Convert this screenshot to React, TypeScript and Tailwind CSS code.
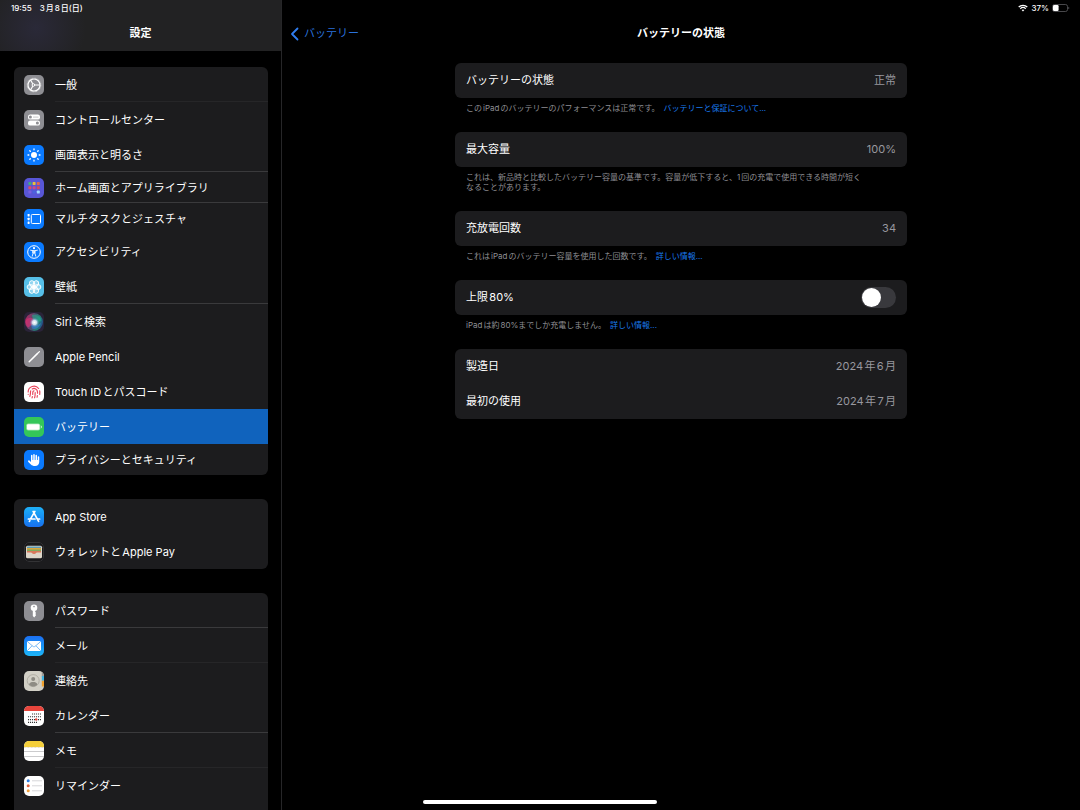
import React, { useState } from 'react';
import { Fingerprint } from 'lucide-react';
import { FaHand } from 'react-icons/fa6';
import clsx from 'clsx';

interface SettingItem {
  label: string;
  icon: React.ReactNode;
  tile: string;
  line?: 'strong' | 'faint';
  compact?: boolean;
  active?: boolean;
}

const Glyph = ({ children }: { children: React.ReactNode }) => (
  <svg viewBox="0 0 20 20" className="size-5" fill="none" aria-hidden="true">
    {children}
  </svg>
);

const GearIcon = () => (
  <Glyph>
    <circle cx="10" cy="10" r="6" stroke="#fff" strokeWidth="1.2" />
    <circle cx="10" cy="10" r="6.8" stroke="#fff" strokeWidth="0.7" strokeDasharray="0.8 0.7" />
    <circle cx="9.4" cy="10" r="1.3" stroke="#fff" strokeWidth="1" />
    <path d="M10.8 10H16M8.8 8.9L6.4 4.8M8.8 11.1L6.4 15.2" stroke="#fff" strokeWidth="1.1" />
  </Glyph>
);

const ControlCenterIcon = () => (
  <Glyph>
    <rect x="4" y="4.6" width="12" height="5" rx="2.2" fill="#fff" />
    <circle cx="6.4" cy="7.1" r="1.5" fill="#8e8e93" />
    <path d="M9 7.1H14.5" stroke="#8e8e93" strokeWidth="0.5" />
    <rect x="4" y="10.6" width="12" height="5" rx="2.2" fill="#fff" />
    <circle cx="13.4" cy="13.1" r="1.5" fill="#8e8e93" />
  </Glyph>
);

const BrightnessIcon = () => (
  <Glyph>
    <circle cx="10" cy="10" r="3" fill="#fff" />
    <path
      d="M10 4V4.8M10 15.2V16M4 10H4.8M15.2 10H16M5.8 5.8L6.3 6.3M13.7 13.7L14.2 14.2M5.8 14.2L6.3 13.7M13.7 6.3L14.2 5.8"
      stroke="#fff"
      strokeWidth="1.3"
      strokeLinecap="round"
    />
  </Glyph>
);

const HomeScreenIcon = () => (
  <Glyph>
    <rect x="4.4" y="4" width="3" height="3" rx="0.7" fill="#3fae7c" />
    <rect x="8.6" y="4" width="3" height="3" rx="0.7" fill="#e8bf3c" />
    <rect x="12.8" y="4" width="3" height="3" rx="0.7" fill="#e0664c" />
    <rect x="4.4" y="8.2" width="3" height="3" rx="0.7" fill="#e04a62" />
    <rect x="8.6" y="8.2" width="3" height="3" rx="0.7" fill="#c94a8c" />
    <rect x="12.8" y="8.2" width="3" height="3" rx="0.7" fill="#d8475c" />
    <rect x="4.4" y="12.6" width="3" height="3" rx="0.7" fill="#7a5fe0" />
    <rect x="8.6" y="12.6" width="3" height="3" rx="0.7" fill="#4a63e0" />
    <rect x="12.8" y="12.6" width="3" height="3" rx="0.7" fill="#9fd8ff" />
  </Glyph>
);

const MultitaskIcon = () => (
  <Glyph>
    <rect x="7.3" y="5.5" width="9.2" height="9" rx="1" stroke="#fff" strokeWidth="1" />
    <rect x="3.6" y="5" width="2" height="2.4" rx="0.4" fill="#fff" />
    <rect x="3.6" y="8.8" width="2" height="2.4" rx="0.4" fill="#fff" />
    <rect x="3.6" y="12.6" width="2" height="2.4" rx="0.4" fill="#fff" />
  </Glyph>
);

const AccessibilityIcon = () => (
  <Glyph>
    <circle cx="10" cy="10" r="6.3" stroke="#fff" strokeWidth="1" />
    <circle cx="10" cy="6.2" r="1.1" fill="#fff" />
    <path
      d="M6.6 8.2L9.2 8.7V11L8.2 14.2M13.4 8.2L10.8 8.7V11L11.8 14.2M9.2 8.7H10.8V11H9.2Z"
      stroke="#fff"
      strokeWidth="0.9"
      strokeLinecap="round"
      strokeLinejoin="round"
    />
  </Glyph>
);

const WallpaperIcon = () => (
  <Glyph>
    {[30, 90, 150, 210, 270, 330].map((angle) => (
      <ellipse
        key={angle}
        cx="10"
        cy="6.2"
        rx="2.5"
        ry="3.1"
        fill="#fff"
        fillOpacity="0.35"
        stroke="#fff"
        strokeWidth="0.9"
        transform={`rotate(${angle} 10 10)`}
      />
    ))}
    <circle cx="10" cy="10" r="1.6" fill="#fff" />
  </Glyph>
);

const SiriIcon = () => (
  <Glyph>
    <defs>
      <linearGradient id="siri-ring" x1="0" y1="0.3" x2="1" y2="0.6">
        <stop offset="0" stopColor="#e0286a" />
        <stop offset="0.45" stopColor="#5a5d86" />
        <stop offset="0.75" stopColor="#1fa58c" />
        <stop offset="1" stopColor="#2458a8" />
      </linearGradient>
      <radialGradient id="siri-core">
        <stop offset="0" stopColor="#fff" />
        <stop offset="0.45" stopColor="#dceefa" stopOpacity="0.9" />
        <stop offset="1" stopColor="#5f8fd0" stopOpacity="0" />
      </radialGradient>
    </defs>
    <circle cx="10" cy="10" r="9" fill="url(#siri-ring)" fillOpacity="0.75" />
    <path d="M2 8C5 5 9 5 12 9C9 12 5 15 4 15.5C2 13 1.5 11 2 8Z" fill="#e32f74" fillOpacity="0.6" />
    <path d="M8 3C13 2 17 5 17.5 9C14 10 11 10 9 8Z" fill="#23b58e" fillOpacity="0.5" />
    <path d="M7 13C11 14 15 13 17 11C16 15 12 18 8 16.5Z" fill="#3a7fe0" fillOpacity="0.6" />
    <circle cx="10.5" cy="10.5" r="4.8" fill="url(#siri-core)" />
  </Glyph>
);

const PencilIcon = () => (
  <Glyph>
    <path d="M5.2 14.8L13.6 6.4" stroke="#fff" strokeWidth="1.5" strokeLinecap="round" />
    <path d="M14.4 5.6L15.4 4.6" stroke="#fff" strokeWidth="1.3" strokeLinecap="round" />
  </Glyph>
);

const BatteryIcon = () => (
  <Glyph>
    <rect x="2.2" y="6.4" width="14" height="7.2" rx="2" fill="#fff" fillOpacity="0.5" />
    <rect x="3" y="7.2" width="12.4" height="5.6" rx="1.3" fill="#fff" />
    <path d="M16.9 8.6C18.2 9 18.2 11 16.9 11.4Z" fill="#fff" fillOpacity="0.8" />
  </Glyph>
);

const AppStoreIcon = () => (
  <Glyph>
    <path
      d="M10.9 4.4L6.7 11.6M9.1 4.4L14.6 14.4M4.4 12H11M14 12H15.6M5.9 13.6L5.4 14.4"
      stroke="#fff"
      strokeWidth="1.7"
      strokeLinecap="round"
    />
  </Glyph>
);

const WalletIcon = () => (
  <Glyph>
    <rect x="0.5" y="0.5" width="19" height="19" rx="4.5" stroke="#3a3a3c" strokeWidth="0.8" />
    <rect x="2" y="3.8" width="16" height="12.4" rx="1.5" fill="#ddd6c9" />
    <rect x="3" y="4.6" width="14" height="2" rx="0.6" fill="#5b9bb5" />
    <rect x="3" y="6" width="14" height="2" rx="0.4" fill="#dba43c" />
    <rect x="3" y="7.5" width="14" height="1.8" rx="0.4" fill="#7faa5a" />
    <path d="M3 9H17V10.5H13C12 10.5 12 12 10 12C8 12 8 10.5 7 10.5H3Z" fill="#d9775a" />
  </Glyph>
);

const KeyIcon = () => (
  <Glyph>
    <circle cx="10" cy="6.8" r="3.3" fill="#fff" />
    <path d="M8.8 9H11.2V11L12.2 12L11.2 13L12.2 14L10.2 16.4L8.8 15Z" fill="#fff" />
    <circle cx="10" cy="5.6" r="0.8" fill="#8e8e93" />
  </Glyph>
);

const MailIcon = () => (
  <Glyph>
    <rect x="3" y="5" width="14" height="10" rx="1.6" fill="#fff" />
    <path
      d="M3.6 5.8L9 10.4C9.6 10.9 10.4 10.9 11 10.4L16.4 5.8M3.6 14.4L8 9.8M16.4 14.4L12 9.8"
      stroke="#3f9bf0"
      strokeWidth="0.7"
    />
  </Glyph>
);

const ContactsIcon = () => (
  <Glyph>
    <path d="M17.8 0H20V5.5H17.8Z" fill="#9a9a98" />
    <path d="M17.8 5H20V9.8H17.8Z" fill="#3fb0dc" />
    <path d="M17.8 9.8H20V15.4H17.8Z" fill="#f0a02c" />
    <circle cx="9.2" cy="9.6" r="6" stroke="#a8a69c" strokeWidth="0.8" />
    <circle cx="9.2" cy="8" r="2" fill="#8e8c84" />
    <path d="M5 13.5C5.5 11.3 7.4 11 9.2 11C11 11 12.9 11.3 13.4 13.5C12 15 10.5 15.5 9.2 15.5C7.8 15.5 6.3 15 5 13.5Z" fill="#8e8c84" />
  </Glyph>
);

const CalendarIcon = () => (
  <Glyph>
    <path d="M0 0H20V5H0Z" fill="#e8453c" />
    <path d="M8 8H17M4 10.8H17M4 13.6H17M4 16.4H13" stroke="#333" strokeWidth="1.1" strokeDasharray="1.1 0.9" />
    <circle cx="12.2" cy="13.4" r="1.2" fill="#e8453c" />
  </Glyph>
);

const NotesIcon = () => (
  <Glyph>
    <path d="M0 0H20V6H0Z" fill="#f5cf3a" />
    <path d="M0 6.4H20" stroke="#c9b98a" strokeWidth="0.6" strokeDasharray="0.8 0.6" />
    <path d="M0 10.5H20M0 15.5H20" stroke="#b4b4b8" strokeWidth="0.7" />
  </Glyph>
);

const RemindersIcon = () => (
  <Glyph>
    <circle cx="4.2" cy="4.8" r="1.5" fill="#2f7de0" />
    <circle cx="4.2" cy="9.8" r="1.5" fill="#e0603c" />
    <circle cx="4.2" cy="14.8" r="1.5" fill="#f0a03c" />
    <path d="M8 4.8H18M8 9.8H18M8 14.8H18" stroke="#c4c4c8" strokeWidth="0.7" />
  </Glyph>
);

const GROUPS: SettingItem[][] = [
  [
    { label: '一般', icon: <GearIcon />, tile: 'bg-[#8e8e93]', line: 'faint' },
    { label: 'コントロールセンター', icon: <ControlCenterIcon />, tile: 'bg-[#8e8e93]' },
    { label: '画面表示と明るさ', icon: <BrightnessIcon />, tile: 'bg-[#0a7aff]', line: 'strong' },
    { label: 'ホーム画面とアプリライブラリ', icon: <HomeScreenIcon />, tile: 'bg-[#5856d6]', line: 'strong', compact: true },
    { label: 'マルチタスクとジェスチャ', icon: <MultitaskIcon />, tile: 'bg-[#0a7aff]', compact: true },
    { label: 'アクセシビリティ', icon: <AccessibilityIcon />, tile: 'bg-[#0a7aff]' },
    { label: '壁紙', icon: <WallpaperIcon />, tile: 'bg-[#56bfe8]', line: 'strong' },
    { label: 'Siriと検索', icon: <SiriIcon />, tile: 'bg-[#2a2338]' },
    { label: 'Apple Pencil', icon: <PencilIcon />, tile: 'bg-[#8e8e93]' },
    {
      label: 'Touch IDとパスコード',
      icon: <Fingerprint className="size-3.5 text-[#e8455c]" strokeWidth={2} />,
      tile: 'bg-white',
    },
    { label: 'バッテリー', icon: <BatteryIcon />, tile: 'bg-[#34c759]', active: true },
    {
      label: 'プライバシーとセキュリティ',
      icon: <FaHand className="size-3 text-white" />,
      tile: 'bg-[#0a7aff]',
      compact: true,
    },
  ],
  [
    { label: 'App Store', icon: <AppStoreIcon />, tile: 'bg-linear-to-b from-[#1fb0f8] to-[#1a70ee]' },
    { label: 'ウォレットとApple Pay', icon: <WalletIcon />, tile: 'bg-[#1a1a1c]' },
  ],
  [
    { label: 'パスワード', icon: <KeyIcon />, tile: 'bg-[#8e8e93]', line: 'strong' },
    { label: 'メール', icon: <MailIcon />, tile: 'bg-linear-to-b from-[#1d6ff2] to-[#1fb6f8]', line: 'faint' },
    { label: '連絡先', icon: <ContactsIcon />, tile: 'bg-[#d2d0c6]' },
    { label: 'カレンダー', icon: <CalendarIcon />, tile: 'bg-white', line: 'strong' },
    { label: 'メモ', icon: <NotesIcon />, tile: 'bg-white', line: 'faint' },
    { label: 'リマインダー', icon: <RemindersIcon />, tile: 'bg-white' },
  ],
];

const SidebarRow = ({ item }: { item: SettingItem }) => (
  <li>
    <a
      href="#"
      aria-current={item.active ? 'page' : undefined}
      className={clsx(
        'flex items-center gap-[11px] pl-2.5',
        item.compact ? 'h-[31px]' : 'h-[35px]',
        item.active && 'bg-[#1063bd]',
      )}
    >
      <span className={clsx('flex size-5 shrink-0 items-center justify-center overflow-hidden rounded-[5px]', item.tile)}>
        {item.icon}
      </span>
      <span
        className={clsx(
          'flex flex-1 items-center self-stretch border-b pt-0.5',
          item.line === 'strong' && 'border-[#3a3a3c]',
          item.line === 'faint' && 'border-[#262628]',
          !item.line && 'border-transparent',
        )}
      >
        {item.label}
      </span>
    </a>
  </li>
);

const Card = ({ children }: { children: React.ReactNode }) => (
  <div className="rounded-md bg-[#1c1c1e] px-[11px]">{children}</div>
);

const InfoRow = ({ label, value }: { label: string; value: string }) => (
  <div className="flex h-[35px] items-center justify-between">
    <span>{label}</span>
    <span className="text-[#98989f]">{value}</span>
  </div>
);

const Note = ({ children }: { children: React.ReactNode }) => (
  <p className="px-[11px] pt-[5px] pb-[19px] text-[8px] leading-[10px] text-[#8e8e93]">{children}</p>
);

const NoteLink = ({ children }: { children: React.ReactNode }) => (
  <a href="#" className="ml-1 text-[#1a7cf0]">
    {children}
  </a>
);

const Sidebar = () => (
  <aside className="flex w-[282px] shrink-0 flex-col border-r border-[#262628]">
    <header className="h-[51px] shrink-0 bg-[#222223] bg-[radial-gradient(circle_at_36px_28px,#2a2938,transparent_50px)]">
      <div className="flex h-4 items-center gap-2 pl-[11px] text-[8px] font-medium">
        <span>19:55</span>
        <span>3月8日(日)</span>
      </div>
      <h2 className="flex h-[35px] items-center justify-center text-[11px] font-bold">設定</h2>
    </header>
    <nav className="flex flex-1 flex-col gap-6 px-[13px] pt-4 pl-3.5 text-[11px]">
      {GROUPS.map((group, i) => (
        <ul key={i} className="overflow-hidden rounded-md bg-[#1c1c1e] last:grow last:rounded-b-none">
          {group.map((item) => (
            <SidebarRow key={item.label} item={item} />
          ))}
        </ul>
      ))}
    </nav>
  </aside>
);

const StatusIcons = () => (
  <div className="flex h-4 items-center justify-end gap-[3px] pr-2.5 text-[8px] font-medium">
    <svg viewBox="0 0 10 8" className="h-2 w-2.5" fill="none" aria-hidden="true">
      <path d="M0.7 3C3 0.7 7 0.7 9.3 3" stroke="#fff" strokeWidth="1.3" />
      <path d="M2.3 4.7C3.8 3.3 6.2 3.3 7.7 4.7" stroke="#fff" strokeWidth="1.3" />
      <path d="M3.6 6C4.4 5.2 5.6 5.2 6.4 6L5 7.5Z" fill="#fff" />
    </svg>
    <span>37%</span>
    <svg viewBox="0 0 18 8" className="h-2 w-[18px]" fill="none" aria-hidden="true">
      <rect x="0.5" y="0.5" width="15" height="7" rx="2" stroke="#5a5a5e" strokeWidth="0.8" />
      <rect x="1" y="1" width="5.6" height="6" rx="1.2" fill="#fff" />
      <path d="M16.5 2.8C17.5 3.2 17.5 4.8 16.5 5.2Z" fill="#6e6e73" />
    </svg>
  </div>
);

export default function App() {
  const [limit, setLimit] = useState(false);

  return (
    <div
      lang="ja"
      className="relative flex h-screen overflow-hidden bg-black font-['Inter','Noto_Sans_CJK_JP',sans-serif] text-white [text-autospace:normal]"
    >
      <Sidebar />

      <main className="flex-1 text-[11px]">
        <StatusIcons />
        <div className="grid h-[35px] grid-cols-[1fr_auto_1fr] items-center">
          <button type="button" className="flex items-center gap-[5px] pl-2 text-[#2a72dc]">
            <svg viewBox="0 0 9 14" className="h-3.5 w-[9px]" fill="none" aria-hidden="true">
              <path d="M7.5 1.5L2 7L7.5 12.5" stroke="#2f7df0" strokeWidth="1.8" strokeLinecap="round" strokeLinejoin="round" />
            </svg>
            バッテリー
          </button>
          <h1 className="font-bold">バッテリーの状態</h1>
        </div>

        <div className="mx-auto max-w-[452px] pt-3">
          <Card>
            <InfoRow label="バッテリーの状態" value="正常" />
          </Card>
          <Note>
            このiPadのバッテリーのパフォーマンスは正常です。
            <NoteLink>バッテリーと保証について...</NoteLink>
          </Note>

          <Card>
            <InfoRow label="最大容量" value="100%" />
          </Card>
          <Note>
            これは、新品時と比較したバッテリー容量の基準です。容量が低下すると、1回の充電で使用できる時間が短く
            <br />
            なることがあります。
          </Note>

          <Card>
            <InfoRow label="充放電回数" value="34" />
          </Card>
          <Note>
            これはiPadのバッテリー容量を使用した回数です。
            <NoteLink>詳しい情報...</NoteLink>
          </Note>

          <Card>
            <div className="flex h-[35px] items-center justify-between">
              <label htmlFor="limit">上限80%</label>
              <input
                id="limit"
                type="checkbox"
                role="switch"
                checked={limit}
                onChange={(e) => setLimit(e.target.checked)}
                className="flex h-[21px] w-[35px] appearance-none rounded-full bg-[#39393d] p-px before:block before:size-[19px] before:rounded-full before:bg-white checked:justify-end checked:bg-[#34c759]"
              />
            </div>
          </Card>
          <Note>
            iPadは約80%までしか充電しません。
            <NoteLink>詳しい情報...</NoteLink>
          </Note>

          <Card>
            <InfoRow label="製造日" value="2024年6月" />
            <InfoRow label="最初の使用" value="2024年7月" />
          </Card>
        </div>
      </main>

      {/* home indicator */}
      <div className="absolute bottom-1.5 left-1/2 h-1 w-[234px] -translate-x-1/2 rounded-full bg-white" />
    </div>
  );
}
